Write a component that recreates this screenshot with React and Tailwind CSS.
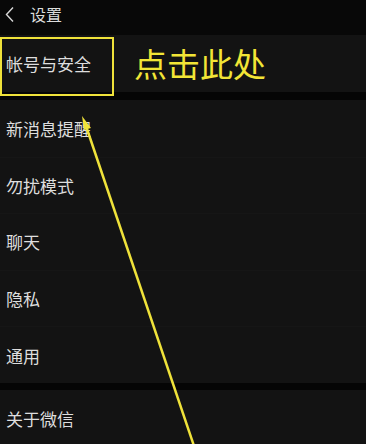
const ROWS = ["新消息提醒", "勿扰模式", "聊天", "隐私", "通用"];

function Row({ label, first }) {
  return (
    <div
      className={`h-[56.6px] flex items-center pl-[6px] bg-[#131313] ${
        first ? "" : "border-t border-[#161616]"
      }`}
    >
      <span className="text-[17px] text-[#dedede] leading-none">{label}</span>
    </div>
  );
}

export default function App() {
  return (
    <div
      className="relative w-[366px] h-[444px] overflow-hidden bg-[#050505]"
      style={{ fontFamily: '"Noto Sans CJK SC", "Noto Sans", sans-serif' }}
    >
      <header className="h-[35px] flex items-start pt-[3px] bg-[#080808]">
        <svg width="11" height="17" viewBox="0 0 11 17" className="ml-[4px] mt-[3px]">
          <path d="M9 1.5 L2.5 8.5 L9 15.5" fill="none" stroke="#d8d8d8" strokeWidth="1.4" />
        </svg>
        <span className="ml-[15px] text-[16px] text-[#dcdcdc] leading-[22px]">设置</span>
      </header>

      <div className="h-[57px] flex items-center bg-[#131313]">
        <span className="pl-[6px] w-[130px] text-[17px] text-[#dedede] leading-none">帐号与安全</span>
        <span className="ml-[4px] text-[33px] font-normal text-[#f2e536] leading-none">点击此处</span>
      </div>

      <div className="h-[8px] bg-[#050505]" />

      <div>
        {ROWS.map((r, i) => (
          <Row key={r} label={r} first={i === 0} />
        ))}
      </div>

      <div className="h-[7px] bg-[#050505]" />

      <Row label="关于微信" first />

      {/* highlight box */}
      <div className="absolute left-0 top-[37px] w-[114px] h-[59px] border-2 border-[#efe23a]" />

      {/* arrow */}
      <svg className="absolute inset-0" width="366" height="444" viewBox="0 0 366 444">
        <line x1="86" y1="126" x2="194" y2="446" stroke="#efe23a" strokeWidth="2.5" />
        <path d="M82 116 L91 128 L84 130 Z" fill="#efe23a" />
      </svg>
    </div>
  );
}
